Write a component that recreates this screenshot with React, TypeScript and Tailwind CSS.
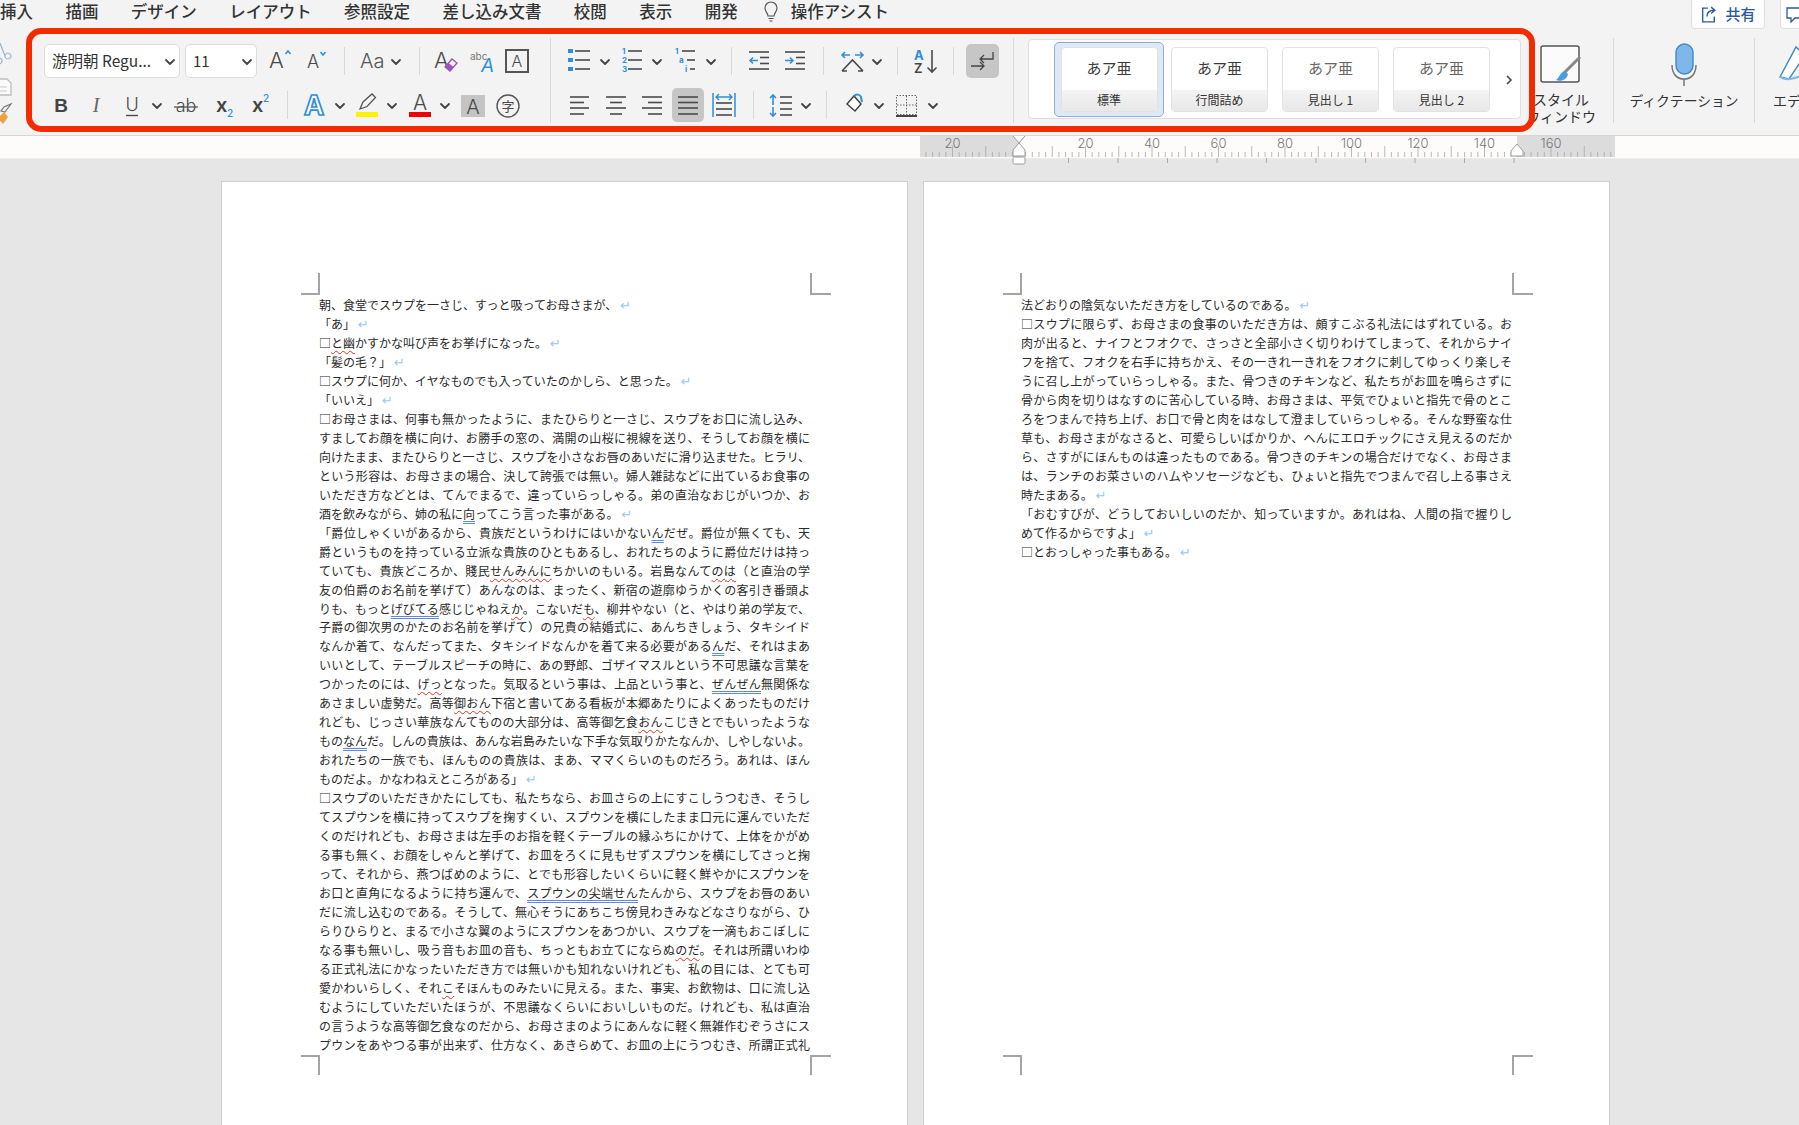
import type { ReactNode } from "react";

const SANS = "Inter, 'Liberation Sans', sans-serif";
const INK = "#4a4a4a";
const BLUE = "#2f8fdc";

const menuItems = ["挿入", "描画", "デザイン", "レイアウト", "参照設定", "差し込み文書", "校閲", "表示", "開発"];

// ~red squiggle~  ^blue double^  trailing ↵ = paragraph end (not justified)
const leftPage = [
  "朝、食堂でスウプを一さじ、すっと吸ってお母さまが、↵",
  "「あ」↵",
  "□~と幽~かすかな叫び声をお挙げになった。↵",
  "「髪の毛\uFF1F」↵",
  "□スウプに何か、イヤなものでも入っていたのかしら、と思った。↵",
  "「いいえ」↵",
  "□お母さまは、何事も無かったように、またひらりと一さじ、スウプをお口に流し込み、",
  "すましてお顔を横に向け、お勝手の窓の、満開の山桜に視線を送り、そうしてお顔を横に",
  "向けたまま、またひらりと一さじ、スウプを小さなお唇のあいだに滑り込ませた。ヒラリ、",
  "という形容は、お母さまの場合、決して誇張では無い。婦人雑誌などに出ているお食事の",
  "いただき方などとは、てんでまるで、違っていらっしゃる。弟の直治なおじがいつか、お",
  "酒を飲みながら、姉の私に^向^ってこう言った事がある。↵",
  "「爵位しゃくいがあるから、貴族だというわけにはいかない^ん^だぜ。爵位が無くても、天",
  "爵というものを持っている立派な貴族のひともあるし、おれたちのように爵位だけは持っ",
  "ていても、貴族どころか、賤民~せんみんに~ちかいのもいる。岩島なんて~のは~\uFF08と直治の学",
  "友の伯爵のお名前を挙げて\uFF09あんなのは、まったく、新宿の遊廓ゆうかくの客引き番頭よ",
  "りも、もっと^げびてる^感じじゃねえ~か~。こないだ~も~、柳井やない\uFF08と、やはり弟の学友で、",
  "子爵の御次男のかたのお名前を挙げて\uFF09の兄貴の結婚式に、あんちきしょう、タキシイド",
  "なんか着て、なんだってまた、タキシイドなんかを着て来る必要がある^ん^だ、それはまあ",
  "いいとして、テーブルスピーチの時に、あの野郎、ゴザイマスルという不可思議な言葉を",
  "つかったのには、~げっ~となった。気取るという事は、上品という事と、^ぜんぜん^無関係な",
  "あさましい虚勢だ。高等~御おん~下宿と書いてある看板が本郷あたりによくあったものだけ",
  "れども、じっさい華族なんてものの大部分は、高等御乞食~おん~こじきとでもいったような",
  "もの^なん^だ。しんの貴族は、あんな岩島みたいな下手な気取りかたなんか、しやしないよ。",
  "おれたちの一族でも、ほんものの貴族は、まあ、ママくらいのものだろう。あれは、ほん",
  "ものだよ。かなわねえところがある」↵",
  "□スウプのいただきかたにしても、私たちなら、お皿さらの上にすこしうつむき、そうし",
  "てスプウンを横に持ってスウプを掬すくい、スプウンを横にしたまま口元に運んでいただ",
  "くのだけれども、お母さまは左手のお指を軽くテーブルの縁ふちにかけて、上体をかがめ",
  "る事も無く、お顔をしゃんと挙げて、お皿をろくに見もせずスプウンを横にしてさっと掬",
  "って、それから、燕つばめのように、とでも形容したいくらいに軽く鮮やかにスプウンを",
  "お口と直角になるように持ち運んで、^スプウンの尖端せん^たんから、スウプをお唇のあい",
  "だに流し込むのである。そうして、無心そうにあちこち傍見わきみなどなさりながら、ひ",
  "らりひらりと、まるで小さな翼のようにスプウンをあつかい、スウプを一滴もおこぼしに",
  "なる事も無いし、吸う音もお皿の音も、ちっともお立てにならぬ~のだ~。それは所謂いわゆ",
  "る正式礼法にかなったいただき方では無いかも知れないけれども、私の目には、とても可",
  "愛かわいらしく、それ~こ~そほんものみたいに見える。また、事実、お飲物は、口に流し込",
  "むようにしていただいたほうが、不思議なくらいにおいしいものだ。けれども、私は直治",
  "の言うような高等御乞食なのだから、お母さまのようにあんなに軽く無雑作むぞうさにス",
  "プウンをあやつる事が出来ず、仕方なく、あきらめて、お皿の上にうつむき、所謂正式礼",
];

const rightPage = [
  "法どおりの陰気ないただき方をしているのである。↵",
  "□スウプに限らず、お母さまの食事のいただき方は、頗すこぶる礼法にはずれている。お",
  "肉が出ると、ナイフとフオクで、さっさと全部小さく切りわけてしまって、それからナイ",
  "フを捨て、フオクを右手に持ちかえ、その一きれ一きれをフオクに刺してゆっくり楽しそ",
  "うに召し上がっていらっしゃる。また、骨つきのチキンなど、私たちがお皿を鳴らさずに",
  "骨から肉を切りはなすのに苦心している時、お母さまは、平気でひょいと指先で骨のとこ",
  "ろをつまんで持ち上げ、お口で骨と肉をはなして澄ましていらっしゃる。そんな野蛮な仕",
  "草も、お母さまがなさると、可愛らしいばかりか、へんにエロチックにさえ見えるのだか",
  "ら、さすがにほんものは違ったものである。骨つきのチキンの場合だけでなく、お母さま",
  "は、ランチのお菜さいのハムやソセージなども、ひょいと指先でつまんで召し上る事さえ",
  "時たまある。↵",
  "「おむすびが、どうしておいしいのだか、知っていますか。あれはね、人間の指で握りし",
  "めて作るからですよ」↵",
  "□とおっしゃった事もある。↵",
];

function DocLine({ text }: { text: string }) {
  const ended = text.endsWith("↵");
  const body = ended ? text.slice(0, -1) : text;
  const parts = body.split(/(~[^~]+~|\^[^^]+\^)/).filter(Boolean);
  return (
    <div className={ended ? "h-[18.97px] whitespace-nowrap" : "h-[18.97px] whitespace-nowrap text-justify [text-align-last:justify]"}>
      {parts.map((p, i) => {
        if (p[0] === "~") {
          return (
            <span key={i} className="underline decoration-wavy decoration-[#e0312a] [text-decoration-thickness:1.3px] [text-decoration-skip-ink:none] underline-offset-2">
              {p.slice(1, -1)}
            </span>
          );
        }
        if (p[0] === "^") {
          return (
            <span key={i} className="underline decoration-double decoration-[#5f88e0] [text-decoration-thickness:1.2px] [text-decoration-skip-ink:none] underline-offset-2">
              {p.slice(1, -1)}
            </span>
          );
        }
        return <span key={i}>{p}</span>;
      })}
      {ended && <span className="ml-[3px] text-[13px] text-[#98c8f4] font-['DejaVu_Sans',sans-serif]">↵</span>}
    </div>
  );
}

function CropMarks() {
  return (
    <>
      <div className="absolute left-[79px] top-[91px] h-[22px] w-[19px] border-b-2 border-r-2 border-[#a4a4a4]" />
      <div className="absolute left-[588px] top-[91px] h-[22px] w-[21px] border-b-2 border-l-2 border-[#a4a4a4]" />
      <div className="absolute left-[79px] top-[873px] h-[20px] w-[19px] border-t-2 border-r-2 border-[#a4a4a4]" />
      <div className="absolute left-[588px] top-[873px] h-[20px] w-[21px] border-t-2 border-l-2 border-[#a4a4a4]" />
    </>
  );
}

function Page({ lines }: { lines: string[] }) {
  return (
    <div className="relative w-[687px] h-[1000px] bg-white border border-[#cdcdcd] pl-[97px] pt-[114px]">
      <CropMarks />
      <div className="w-[491px] text-[12px] leading-[18.97px] text-[#2a2a2a]">
        {lines.map((l, i) => (
          <DocLine key={i} text={l} />
        ))}
      </div>
    </div>
  );
}

function Ico({ w, children, className = "" }: { w: number; children: ReactNode; className?: string }) {
  return (
    <svg width={w} height={34} viewBox={`0 0 ${w} 34`} fill="none" overflow="visible" className={`shrink-0 ${className}`}>
      {children}
    </svg>
  );
}

function T({ x, y, s, c = INK, w = 300, anchor, italic, family = SANS, children }: {
  x: number; y: number; s: number; c?: string; w?: number; anchor?: "middle"; italic?: boolean; family?: string; children: ReactNode;
}) {
  return (
    <text x={x} y={y} fontSize={s} fill={c} fontWeight={w} textAnchor={anchor} fontStyle={italic ? "italic" : undefined} fontFamily={family}>
      {children}
    </text>
  );
}

function Chev({ className = "" }: { className?: string }) {
  return (
    <svg width={14} height={34} viewBox="0 0 14 34" fill="none" className={`shrink-0 ${className}`}>
      <path d="M3 16l4 4 4-4" stroke="#444" strokeWidth={1.8} strokeLinecap="round" strokeLinejoin="round" />
    </svg>
  );
}

function Sep({ className = "" }: { className?: string }) {
  return <div className={`w-px h-[28px] shrink-0 bg-[#d8d8d8] ${className}`} />;
}

function Lines({ rows, sw = 1.6, c = INK }: { rows: [number, number, number][]; sw?: number; c?: string }) {
  return (
    <>
      {rows.map(([x1, x2, y], i) => (
        <path key={i} d={`M${x1} ${y}H${x2}`} stroke={c} strokeWidth={sw} />
      ))}
    </>
  );
}

function FontPicker() {
  return (
    <>
      <div className="flex items-center justify-between w-[136px] h-[34px] rounded-[5px] bg-white border border-[#dcdcdc] pl-[7px] pr-[2px] text-[15.5px] text-[#333] whitespace-nowrap">
        <span>游明朝 Regu...</span>
        <Chev />
      </div>
      <div className="flex items-center justify-between w-[72px] h-[34px] ml-[5px] rounded-[5px] bg-white border border-[#dcdcdc] pl-[7px] pr-[2px] text-[15px] text-[#333]">
        <span>11</span>
        <Chev />
      </div>
    </>
  );
}

function FontGroup() {
  return (
    <div className="flex flex-col gap-[10px] w-[518px] shrink-0 pl-[12px] pt-[10px]">
      <div className="flex items-center h-[34px]">
        <FontPicker />
        <Ico w={36} className="ml-[4px]">
          <T x={8} y={24} s={22}>A</T>
          <path d="M24.5 10l2.5-3 2.5 3" stroke={BLUE} strokeWidth={1.5} />
        </Ico>
        <Ico w={36} className="ml-[1px]">
          <T x={9} y={24} s={18}>A</T>
          <path d="M22.5 8l2.5 3 2.5-3" stroke={BLUE} strokeWidth={1.5} />
        </Ico>
        <Sep className="ml-[10px]" />
        <Ico w={28} className="ml-[13px]">
          <T x={2} y={24} s={20} c="#555">Aa</T>
        </Ico>
        <Chev className="ml-[3px]" />
        <Sep className="ml-[16px]" />
        <Ico w={32} className="ml-[8px]">
          <T x={6} y={24} s={22}>A</T>
          <path d="M17 23l7-8 5 4-7 8z" stroke="#a050c0" strokeWidth={1.3} />
          <path d="M17 23l3.5-4 5 4-3.5 4z" fill="#a050c0" />
        </Ico>
        <Ico w={32} className="ml-[5px]">
          <T x={5} y={16} s={10} c="#777" w={400}>abc</T>
          <T x={16} y={28} s={19} c={BLUE} w={400} italic>A</T>
        </Ico>
        <Ico w={32} className="ml-[4px]">
          <rect x={5} y={6} width={22} height={22} stroke="#555" strokeWidth={2} />
          <T x={16} y={23} s={16} anchor="middle">A</T>
        </Ico>
      </div>
      <div className="flex items-center h-[34px]">
        <Ico w={30} className="ml-[2px]">
          <T x={15} y={24} s={19} w={700} anchor="middle" c="#444" family="'Liberation Sans', sans-serif">B</T>
        </Ico>
        <Ico w={30} className="ml-[5px]">
          <T x={15} y={24} s={20} w={400} anchor="middle" c="#666" italic family="'Liberation Serif', serif">I</T>
        </Ico>
        <Ico w={30} className="ml-[6px]">
          <T x={15} y={23} s={18} anchor="middle">U</T>
          <path d="M9 27.5h12" stroke={INK} strokeWidth={1.4} />
        </Ico>
        <Chev className="ml-[3px]" />
        <Ico w={32} className="ml-[6px]">
          <T x={16} y={24} s={18} anchor="middle">ab</T>
          <path d="M4 19h24" stroke={INK} strokeWidth={1.2} />
        </Ico>
        <Ico w={30} className="ml-[5px]">
          <T x={9} y={24} s={20} w={600} c="#444">x</T>
          <T x={20} y={29} s={10} w={500} c={BLUE}>2</T>
        </Ico>
        <Ico w={30} className="ml-[7px]">
          <T x={8} y={24} s={20} w={600} c="#444">x</T>
          <T x={19} y={14} s={10} w={500} c={BLUE}>2</T>
        </Ico>
        <Sep className="ml-[13px]" />
        <Ico w={30} className="ml-[11px]">
          <text x={15} y={27} fontSize={27} fontWeight={700} textAnchor="middle" fontFamily={SANS} fill="#fff" stroke={BLUE} strokeWidth={1.7}>A</text>
        </Ico>
        <Chev className="ml-[4px]" />
        <Ico w={30} className="ml-[5px]">
          <path d="M8 21l3-7 9-8 3.5 3.5-8.5 9z" stroke="#555" strokeWidth={1.3} />
          <rect x={4} y={24} width={22} height={5} fill="#fff200" />
        </Ico>
        <Chev className="ml-[3px]" />
        <Ico w={30} className="ml-[6px]">
          <T x={15} y={22} s={21} anchor="middle">A</T>
          <rect x={4} y={24} width={22} height={5} fill="#f00000" />
        </Ico>
        <Chev className="ml-[3px]" />
        <Ico w={24} className="ml-[9px]">
          <rect x={0} y={7} width={24} height={22} fill="#c4c4c4" />
          <T x={12} y={26} s={20} anchor="middle">A</T>
        </Ico>
        <Ico w={28} className="ml-[9px]">
          <circle cx={14} cy={18} r={11} stroke="#555" strokeWidth={1.4} />
          <T x={14} y={23} s={13} w={400} anchor="middle" family="'Noto Sans CJK JP', sans-serif">字</T>
        </Ico>
      </div>
    </div>
  );
}

function ParagraphGroup() {
  return (
    <div className="flex flex-col gap-[10px] w-[462px] shrink-0 pt-[10px]">
      <div className="flex items-center h-[34px]">
        <Ico w={28} className="ml-[14px]">
          <rect x={3} y={5} width={5} height={4} fill={BLUE} />
          <rect x={3} y={14} width={5} height={4} fill={BLUE} />
          <rect x={3} y={23} width={5} height={4} fill={BLUE} />
          <Lines rows={[[10, 25, 7], [10, 25, 16], [10, 25, 25]]} />
        </Ico>
        <Chev className="ml-[5px]" />
        <Ico w={26} className="ml-[7px]">
          <T x={3} y={10} s={8} c={BLUE} w={700}>1</T>
          <T x={3} y={19} s={8} c={BLUE} w={700}>2</T>
          <T x={3} y={28} s={8} c={BLUE} w={700}>3</T>
          <Lines rows={[[9, 23, 7], [9, 23, 16], [9, 23, 25]]} />
        </Ico>
        <Chev className="ml-[5px]" />
        <Ico w={26} className="ml-[8px]">
          <T x={3} y={10} s={8} c={BLUE} w={700}>1</T>
          <T x={7} y={19} s={8} c={BLUE} w={700}>a</T>
          <T x={13} y={28} s={8} c={BLUE} w={700}>i</T>
          <Lines rows={[[10, 23, 7], [15, 23, 16], [18, 23, 25]]} />
        </Ico>
        <Chev className="ml-[6px]" />
        <Sep className="ml-[13px]" />
        <Ico w={24} className="ml-[15px]">
          <Lines rows={[[2, 22, 8], [13, 22, 13.5], [13, 22, 19.5], [2, 22, 25]]} />
          <path d="M11 16.5H3m3-3l-3 3 3 3" stroke={BLUE} strokeWidth={1.6} />
        </Ico>
        <Ico w={24} className="ml-[12px]">
          <Lines rows={[[2, 22, 8], [13, 22, 13.5], [13, 22, 19.5], [2, 22, 25]]} />
          <path d="M2 16.5h8m-3-3l3 3-3 3" stroke={BLUE} strokeWidth={1.6} />
        </Ico>
        <Sep className="ml-[16px]" />
        <Ico w={26} className="ml-[16px]">
          <path d="M10 11H2m3-3l-3 3 3 3M15 11h8m-3-3l3 3-3 3" stroke={BLUE} strokeWidth={1.6} />
          <path d="M2 27l10.5-11L23 27M2 27h5M18 27h5" stroke={INK} strokeWidth={1.6} />
        </Ico>
        <Chev className="ml-[4px]" />
        <Sep className="ml-[13px]" />
        <Ico w={26} className="ml-[14px]">
          <T x={2} y={16} s={13} w={700} c={BLUE}>A</T>
          <T x={2} y={29} s={13} w={600} c="#444">Z</T>
          <path d="M20 6v22m-4.5-4.5L20 28l4.5-4.5" stroke={INK} strokeWidth={1.6} />
        </Ico>
        <Sep className="ml-[15px]" />
        <div className="ml-[12px] w-[33px] h-[34px] rounded-[5px] bg-[#c6c6c6]">
          <Ico w={33}>
            <path d="M27 8v7H14m4-4l-4 4 4 4" stroke="#444" strokeWidth={1.3} />
            <path d="M5 22h13m-4-4l4 4-4 4" stroke="#444" strokeWidth={1.3} />
          </Ico>
        </div>
      </div>
      <div className="flex items-center h-[34px]">
        <Ico w={24} className="ml-[16px]">
          <Lines rows={[[3, 22, 9], [3, 17, 14.5], [3, 22, 20], [3, 17, 26]]} />
        </Ico>
        <Ico w={24} className="ml-[13px]">
          <Lines rows={[[2, 22, 9], [6, 18, 14.5], [2, 22, 20], [6, 18, 26]]} />
        </Ico>
        <Ico w={24} className="ml-[12px]">
          <Lines rows={[[2, 22, 9], [8, 22, 14.5], [2, 22, 20], [8, 22, 26]]} />
        </Ico>
        <div className="ml-[8px] w-[32px] h-[34px] rounded-[5px] bg-[#c6c6c6]">
          <Ico w={32}>
            <Lines rows={[[6, 26, 9], [6, 26, 14.5], [6, 26, 20], [6, 26, 26]]} />
          </Ico>
        </div>
        <Ico w={26} className="ml-[7px]">
          <path d="M2 5v24M24 5v24" stroke={BLUE} strokeWidth={1.5} />
          <path d="M5 9h16M8 6l-3 3 3 3M18 6l3 3-3 3" stroke={BLUE} strokeWidth={1.4} />
          <Lines rows={[[5, 21, 15], [5, 21, 21], [5, 21, 27]]} />
        </Ico>
        <Sep className="ml-[16px]" />
        <Ico w={26} className="ml-[14px]">
          <path d="M5 7v10m-3-7l3-3 3 3M5 19v9m-3-3l3 3 3-3" stroke={BLUE} strokeWidth={1.6} />
          <Lines rows={[[12, 24, 9], [12, 24, 15], [12, 24, 21], [12, 24, 27]]} />
        </Ico>
        <Chev className="ml-[5px]" />
        <Sep className="ml-[13px]" />
        <Ico w={24} className="ml-[16px]">
          <path d="M4 16l7-8 7 8-6 7z" stroke="#444" strokeWidth={1.5} fill="#fff" />
          <path d="M11 8c2-2 6-2 7 1l1 5" stroke={BLUE} strokeWidth={2} />
        </Ico>
        <Chev className="ml-[5px]" />
        <Ico w={24} className="ml-[9px]">
          <rect x={1.5} y={7.5} width={20} height={19} stroke="#666" strokeWidth={1} strokeDasharray="1.5 1.5" />
          <path d="M11.5 8v19M2 17h20" stroke="#666" strokeWidth={1} strokeDasharray="1.5 1.5" />
          <path d="M1 28h21" stroke="#333" strokeWidth={1.8} />
        </Ico>
        <Chev className="ml-[7px]" />
      </div>
    </div>
  );
}

function StyleCard({ sample, label, muted }: { sample: string; label: string; muted?: boolean }) {
  return (
    <div className="flex flex-col w-[97px] h-[65px] shrink-0 rounded-[4px] border border-[#e2e2e2] overflow-hidden bg-white">
      <div className={muted ? "flex items-center justify-center h-[42px] text-[15px] text-[#666]" : "flex items-center justify-center h-[42px] text-[15px] text-[#3a3a3a]"}>
        {sample}
      </div>
      <div className="flex items-center justify-center flex-1 bg-linear-to-b from-[#f4f4f4] to-[#e8e8e8] text-[12px] text-[#333]">
        {label}
      </div>
    </div>
  );
}

function StylesPanel() {
  return (
    <div className="flex items-center w-[493px] h-[80px] mt-[5px] ml-[14px] shrink-0 rounded-[4px] bg-white border border-[#dedede] pl-[25px]">
      <div className="flex items-center justify-center w-[110px] h-[75px] shrink-0 rounded-[5px] bg-[#dfe8f5] border border-[#8faedb]">
        <StyleCard sample="あア亜" label="標準" />
      </div>
      <div className="ml-[7px]">
        <StyleCard sample="あア亜" label="行間詰め" />
      </div>
      <div className="ml-[14px]">
        <StyleCard sample="あア亜" label="見出し 1" muted />
      </div>
      <div className="ml-[14px]">
        <StyleCard sample="あア亜" label="見出し 2" muted />
      </div>
      <svg width={8} height={12} viewBox="0 0 8 12" fill="none" className="ml-[15px] mt-[1px] shrink-0">
        <path d="M2 2l4 4-4 4" stroke="#444" strokeWidth={1.6} />
      </svg>
    </div>
  );
}

function ClippedTools() {
  return (
    <svg width={26} height={100} viewBox="0 0 26 100" fill="none" className="shrink-0 mt-[10px]">
      <path d="M0 5l5 13M-1 20a3 3 0 1 0 0.1 0M8 21a3 3 0 1 0-0.1 0" stroke="#9bb4cc" strokeWidth={1.2} />
      <path d="M-2 41h9l4 4v12H-2z" stroke="#bdbdbd" strokeWidth={1.3} fill="#fafafa" />
      <path d="M0 49h7M0 53h7" stroke="#c9c9c9" strokeWidth={1} />
      <path d="M11 66l-6 8-4-1 3-4z" stroke="#777" strokeWidth={1.2} />
      <path d="M-2 80l6-6 4 5-5 7z" fill="#f0a040" />
    </svg>
  );
}

function StyleWindowButton() {
  return (
    <div className="flex flex-col items-center w-[70px] -ml-[9px] shrink-0 pt-[17px] text-[14px] leading-[17px] text-[#333]">
      <svg width={44} height={40} viewBox="0 0 44 40" fill="none" className="shrink-0">
        <rect x={2} y={1} width={38} height={36} rx={2} stroke="#555" strokeWidth={1.5} fill="#fbfbfb" />
        <path d="M41 12L25 28" stroke="#888" strokeWidth={3} />
        <path d="M26 26c-5 1-5 6-9 9 5 2 11 0 12-6z" fill="#4a9ee0" />
      </svg>
      <div className="mt-[6px] whitespace-nowrap">スタイル</div>
      <div className="whitespace-nowrap">ウィンドウ</div>
    </div>
  );
}

function DictationButton() {
  return (
    <div className="flex flex-col items-center w-[142px] shrink-0 border-x border-[#d8d8d8] h-[85px] mt-[10px] pt-[5px] ml-[17px] text-[13.8px] leading-[17px] text-[#333]">
      <svg width={30} height={43} viewBox="0 0 30 43" fill="none" className="shrink-0">
        <rect x={7} y={1} width={17} height={30} rx={8.5} fill="#7fb8e8" stroke="#3f88c8" strokeWidth={1.4} />
        <path d="M3 22c0 9 5 14 12 14s12-5 12-14M15 36v7" stroke="#777" strokeWidth={1.5} />
      </svg>
      <div className="mt-[6px] whitespace-nowrap">ディクテーション</div>
    </div>
  );
}

function EditorButton() {
  return (
    <div className="flex flex-col w-[60px] shrink-0 ml-[18px] pt-[15px] text-[14px] leading-[17px] text-[#333]">
      <svg width={30} height={43} viewBox="0 0 30 43" fill="none" className="shrink-0 ml-[5px]">
        <path d="M2 34L18 4l9 8-16 24z" stroke="#3f88c8" strokeWidth={1.5} fill="#fff" />
        <path d="M2 34c6 4 12 2 24-2" stroke="#7fb8e8" strokeWidth={2} />
      </svg>
      <div className="mt-[6px] whitespace-nowrap">エディター</div>
    </div>
  );
}

function Ruler() {
  const zero = 99;
  const mm = 3.325;
  const ticks: { x: number; long: boolean }[] = [];
  for (let m = -28; m <= 178; m += 2) {
    ticks.push({ x: zero + m * mm, long: m % 10 === 0 });
  }
  const labels = [-20, 20, 40, 60, 80, 100, 120, 140, 160];
  return (
    <svg width={695} height={30} viewBox="0 0 695 30" fill="none" className="block ml-[920px] shrink-0" overflow="visible">
      <rect x={0} y={0} width={99} height={21} fill="#dcdcdc" />
      <rect x={597} y={0} width={98} height={21} fill="#dcdcdc" />
      {ticks.map((t, i) => (
        <path key={i} d={`M${t.x} ${t.long ? 10 : 16}V21`} stroke="#a8a8a8" strokeWidth={0.8} />
      ))}
      {labels.map((l) => (
        <text key={l} x={zero + l * mm} y={12} fontSize={13} textAnchor="middle" fill="#777" fontFamily={SANS} fontWeight={300}>
          {Math.abs(l)}
        </text>
      ))}
      {[0, 1, 2, 3, 4, 5, 6, 7, 8, 9, 10].map((n) => (
        <path key={n} d={`M${99 + n * 49.5} 22V27`} stroke="#9a9a9a" strokeWidth={0.8} />
      ))}
      <path d="M93 0l6 7 6-7M93 14l6-7 6 7v6H93z" stroke="#9a9a9a" strokeWidth={1} fill="#fff" />
      <rect x={93} y={21} width={12} height={7} rx={1.5} stroke="#9a9a9a" strokeWidth={1} fill="#fff" />
      <path d="M591 20v-5l6-7 6 7v5z" stroke="#9a9a9a" strokeWidth={1} fill="#fff" />
    </svg>
  );
}

export default function App() {
  return (
    <div className="w-[1799px] h-[1125px] overflow-hidden bg-[#e6e6e6] font-['Noto_Sans_CJK_JP',sans-serif]">
      <div className="bg-[#f3f3f3] border-b border-[#d6d6d6]">
        <div className="flex items-start h-[28px] text-[16.5px] leading-[22px] font-medium text-[#333]">
          <div className="flex gap-[32.4px]">
            {menuItems.map((m) => (
              <span key={m} className="whitespace-nowrap">{m}</span>
            ))}
          </div>
          <svg width={16} height={24} viewBox="0 0 16 24" fill="none" className="ml-[25px] shrink-0">
            <path d="M5 16c0-3-3-4-3-8a6 6 0 0 1 12 0c0 4-3 5-3 8z" stroke="#555" strokeWidth={1.2} />
            <path d="M5.5 18.5h5M6.5 21h3" stroke="#555" strokeWidth={1.2} />
          </svg>
          <span className="ml-[12px] whitespace-nowrap">操作アシスト</span>
          <div className="ml-auto flex items-center justify-center gap-[7px] w-[74px] h-[29px] rounded-b-[4px] bg-white border border-t-0 border-[#dedede] text-[15px] text-[#2c5a9e]">
            <svg width={18} height={19} viewBox="0 0 16 18" fill="none">
              <path d="M7 3H2v13h11v-5M6 11c0-4 3-6 7-6M10 2l3.5 3L10 8" stroke="#2c5a9e" strokeWidth={1.3} />
            </svg>
            共有
          </div>
          <div className="ml-[15px] w-[19px] h-[29px] rounded-bl-[4px] bg-white border-l border-b border-[#dedede] pl-[5px] pt-[7px]">
            <svg width={14} height={16} viewBox="0 0 14 16" fill="none">
              <path d="M14 1H1v10h4v4l4-4h5" stroke="#2c5a9e" strokeWidth={1.3} />
            </svg>
          </div>
        </div>
        <div className="flex items-start h-[107px] overflow-hidden">
          <ClippedTools />
          <div className="relative z-10 flex items-start w-[1509px] h-[104px] shrink-0 rounded-[15px] border-[6px] border-[#f32c00] bg-[#f3f3f3]">
            <FontGroup />
            <div className="w-px h-[85px] mt-[4px] shrink-0 bg-[#d8d8d8]" />
            <ParagraphGroup />
            <div className="w-px h-[85px] mt-[4px] shrink-0 bg-[#d8d8d8]" />
            <StylesPanel />
          </div>
          <StyleWindowButton />
          <DictationButton />
          <EditorButton />
        </div>
      </div>
      <div className="relative h-[22px] bg-[#fdfcfb]">
        <div className="absolute left-0 top-0 z-10">
          <Ruler />
        </div>
      </div>
      <div className="flex gap-[15px] pl-[221px] pt-[22px] border-t border-[#ececec]">
        <Page lines={leftPage} />
        <Page lines={rightPage} />
      </div>
    </div>
  );
}
